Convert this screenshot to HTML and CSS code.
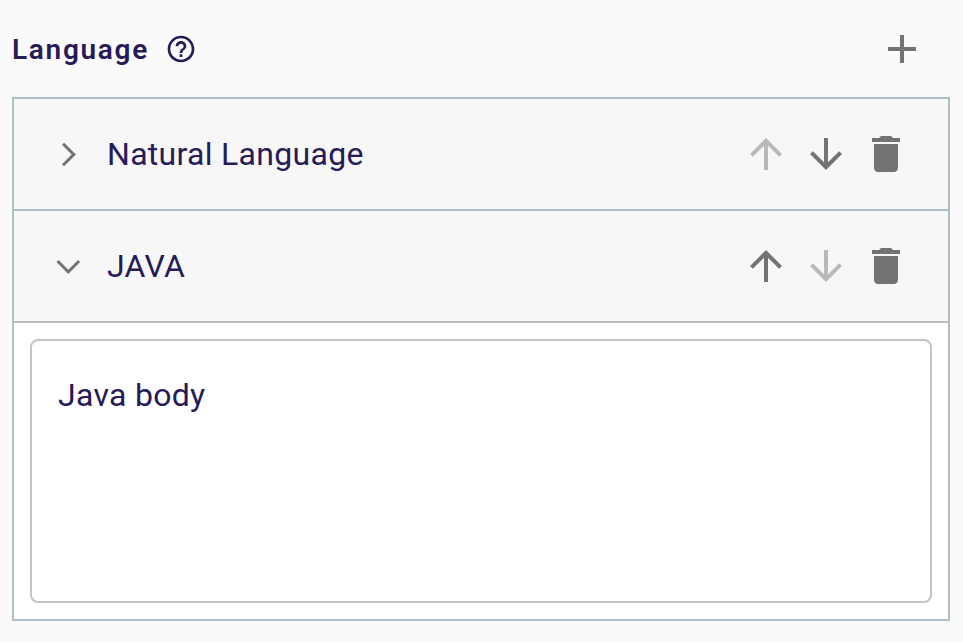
FILE: index.html
```html
<!DOCTYPE html>
<html lang="en">
<head>
<meta charset="utf-8">
<title>Language</title>
<link rel="stylesheet" href="styles.css">
</head>
<body>
<header class="header">
  <h1 class="title">Language</h1>
  <svg class="help" viewBox="0 0 24 24"><path d="M11 18h2v-2h-2v2zm1-16C6.480 2 2 6.480 2 12s4.480 10 10 10 10-4.480 10-10S17.520 2 12 2zm0 18c-4.410 0-8-3.590-8-8s3.590-8 8-8 8 3.590 8 8-3.590 8-8 8zm0-14c-2.210 0-4 1.790-4 4h2c0-1.100.9-2 2-2s2 .9 2 2c0 2-3 1.750-3 5h2c0-2.250 3-2.500 3-5 0-2.210-1.790-4-4-4z"/></svg>
  <svg class="icon add" viewBox="0 0 24 24"><path d="M19 13h-6v6h-2v-6H5v-2h6V5h2v6h6v2z"/></svg>
</header>
<main class="list">
  <section class="row">
    <svg class="icon chevron" viewBox="0 0 48 48"><path d="m19 13.700 10.800 10.800L19 35.300"/></svg>
    <span class="name">Natural Language</span>
    <div class="actions">
      <svg class="icon disabled" viewBox="0 0 24 24"><path d="m4 12 1.410 1.410L11 7.830V20h2V7.830l5.580 5.590L20 12l-8-8-8 8z"/></svg>
      <svg class="icon" viewBox="0 0 24 24"><path d="m20 12-1.410-1.410L13 16.170V4h-2v12.170l-5.580-5.590L4 12l8 8 8-8z"/></svg>
      <svg class="icon" viewBox="0 0 24 24"><path d="M6 19c0 1.100.9 2 2 2h8c1.100 0 2-.9 2-2V7H6v12zM19 4h-3.500l-1-1h-5l-1 1H5v2h14V4z"/></svg>
    </div>
  </section>
  <section class="row expanded">
    <svg class="icon chevron" viewBox="0 0 48 48"><path d="m13.500 19 10.800 10.800L35.100 19"/></svg>
    <span class="name">JAVA</span>
    <div class="actions">
      <svg class="icon" viewBox="0 0 24 24"><path d="m4 12 1.410 1.410L11 7.830V20h2V7.830l5.580 5.590L20 12l-8-8-8 8z"/></svg>
      <svg class="icon disabled" viewBox="0 0 24 24"><path d="m20 12-1.410-1.410L13 16.170V4h-2v12.170l-5.580-5.590L4 12l8 8 8-8z"/></svg>
      <svg class="icon" viewBox="0 0 24 24"><path d="M6 19c0 1.100.9 2 2 2h8c1.100 0 2-.9 2-2V7H6v12zM19 4h-3.500l-1-1h-5l-1 1H5v2h14V4z"/></svg>
    </div>
  </section>
  <div class="body">
    <div class="editor">Java body</div>
  </div>
</main>
</body>
</html>
```

FILE: styles.css
```css
* { box-sizing: border-box; }
body {
  margin: 0;
  height: 642px;
  overflow: hidden;
  background: #fafafa;
  color: #261b57;
  font-family: Roboto, sans-serif;
}
.header {
  display: flex;
  align-items: center;
  height: 97px;
  padding: 0 37px 0 12px;
}
.title {
  margin: 0;
  padding-top: 2px;
  width: 153px;
  font-size: 28px;
  font-weight: 600;
  line-height: 32px;
  letter-spacing: 1.7px;
}
.help { width: 32px; height: 32px; fill: #261b57; }
.icon { display: block; width: 48px; height: 48px; flex: none; fill: #737373; }
.chevron { fill: none; stroke: #737373; stroke-width: 3; }
.add { margin-left: auto; }
.list {
  width: 938px;
  height: 524px;
  margin-left: 12px;
  border: 2px solid #b0bec5;
  background: #fff;
}
.row {
  display: flex;
  align-items: center;
  height: 112px;
  padding: 0 38px 0 30px;
  background: #f7f7f7;
  border-bottom: 2px solid #b0bec5;
}
.expanded { border-bottom-color: #bdbdbd; }
.name {
  margin-left: 15px;
  font-size: 32px;
  line-height: 48px;
  letter-spacing: 0.3px;
}
.actions { display: flex; gap: 12px; margin-left: auto; }
.disabled { fill: #b9b9b9; }
.body { padding: 16px; }
.editor {
  height: 264px;
  padding: 30px 26px;
  border: 2px solid #c4c4c4;
  border-radius: 8px;
  font-size: 32px;
  line-height: 48px;
  letter-spacing: 0.3px;
}
```
